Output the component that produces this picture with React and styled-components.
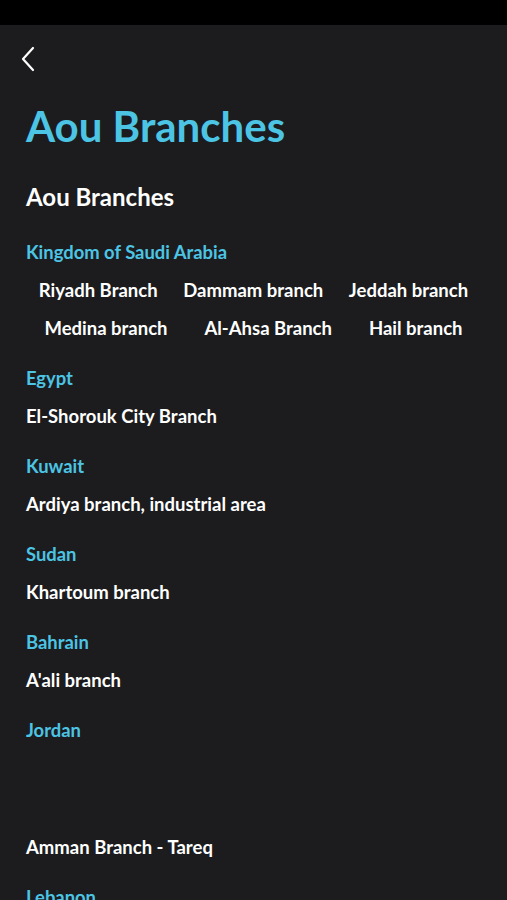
import React from "react";
import styled, { createGlobalStyle } from "styled-components";

const Global = createGlobalStyle`
  html, body { margin: 0; padding: 0; background: #1c1c1e; }
  body { font-family: "Lato", "Noto Sans", sans-serif; -webkit-font-smoothing: antialiased; }
`;

const Screen = styled.div`
  width: 507px;
  height: 900px;
  overflow: hidden;
  background: #1c1c1e;
`;

const StatusBar = styled.div`
  height: 25px;
  background: #000;
`;

const NavBar = styled.div`
  height: 70px;
  display: flex;
  align-items: center;
  padding: 0 14px;
`;

const BackButton = styled.button`
  background: none;
  border: 0;
  padding: 0;
  width: 28px;
  height: 28px;
  display: flex;
  align-items: center;
  justify-content: center;
  color: #fff;
  margin-top: -2px;
`;

const Content = styled.div`
  padding: 0 26px;
  display: flex;
  flex-direction: column;
`;

const Title = styled.h1`
  margin: 6px 0 0;
  font-size: 42px;
  line-height: 50px;
  font-weight: 700;
  color: #4cc4e4;
`;

const Subtitle = styled.h2`
  margin: 31px 0 0;
  font-size: 24px;
  line-height: 30px;
  font-weight: 700;
  color: #fff;
`;

const Country = styled.h3`
  margin: ${(p) => (p.$first ? "28px" : "26px")} 0 0;
  font-size: 18.4px;
  line-height: 24px;
  font-weight: 700;
  color: #4cc4e4;
`;

const BranchList = styled.div`
  display: flex;
  flex-wrap: wrap;
  justify-content: ${(p) => (p.$spread ? "space-around" : "flex-start")};
  row-gap: 14px;
  margin-top: ${(p) => p.$gap || 14}px;
`;

const Branch = styled.div`
  font-size: 18.5px;
  line-height: 24px;
  font-weight: 700;
  color: #fff;
  white-space: nowrap;
  flex: ${(p) => (p.$spread ? "0 0 auto" : "1 1 100%")};
`;

const countries = [
  {
    name: "Kingdom of Saudi Arabia",
    spread: true,
    branches: [
      "Riyadh Branch",
      "Dammam branch",
      "Jeddah branch",
      "Medina branch",
      "Al-Ahsa Branch",
      "Hail branch",
    ],
  },
  { name: "Egypt", branches: ["El-Shorouk City Branch"] },
  { name: "Kuwait", branches: ["Ardiya branch, industrial area"] },
  { name: "Sudan", branches: ["Khartoum branch"] },
  { name: "Bahrain", branches: ["A'ali branch"] },
  { name: "Jordan", branches: ["Amman Branch - Tareq"], gap: 93 },
  { name: "Lebanon", branches: ["Beirut branch"] },
];

function Chevron() {
  return (
    <svg width="16" height="26" viewBox="0 0 16 26" fill="none">
      <path d="M13 2 L3 13 L13 24" stroke="#fff" strokeWidth="2.2" strokeLinecap="round" strokeLinejoin="round" />
    </svg>
  );
}

export default function App() {
  return (
    <>
      <Global />
      <Screen>
        <StatusBar />
        <NavBar>
          <BackButton aria-label="Back">
            <Chevron />
          </BackButton>
        </NavBar>
        <Content>
          <Title>Aou Branches</Title>
          <Subtitle>Aou Branches</Subtitle>
          {countries.map((c, i) => (
            <React.Fragment key={c.name}>
              <Country $first={i === 0}>{c.name}</Country>
              <BranchList $spread={c.spread} $gap={c.gap}>
                {c.branches.map((b) => (
                  <Branch key={b} $spread={c.spread}>{b}</Branch>
                ))}
              </BranchList>
            </React.Fragment>
          ))}
        </Content>
      </Screen>
    </>
  );
}
